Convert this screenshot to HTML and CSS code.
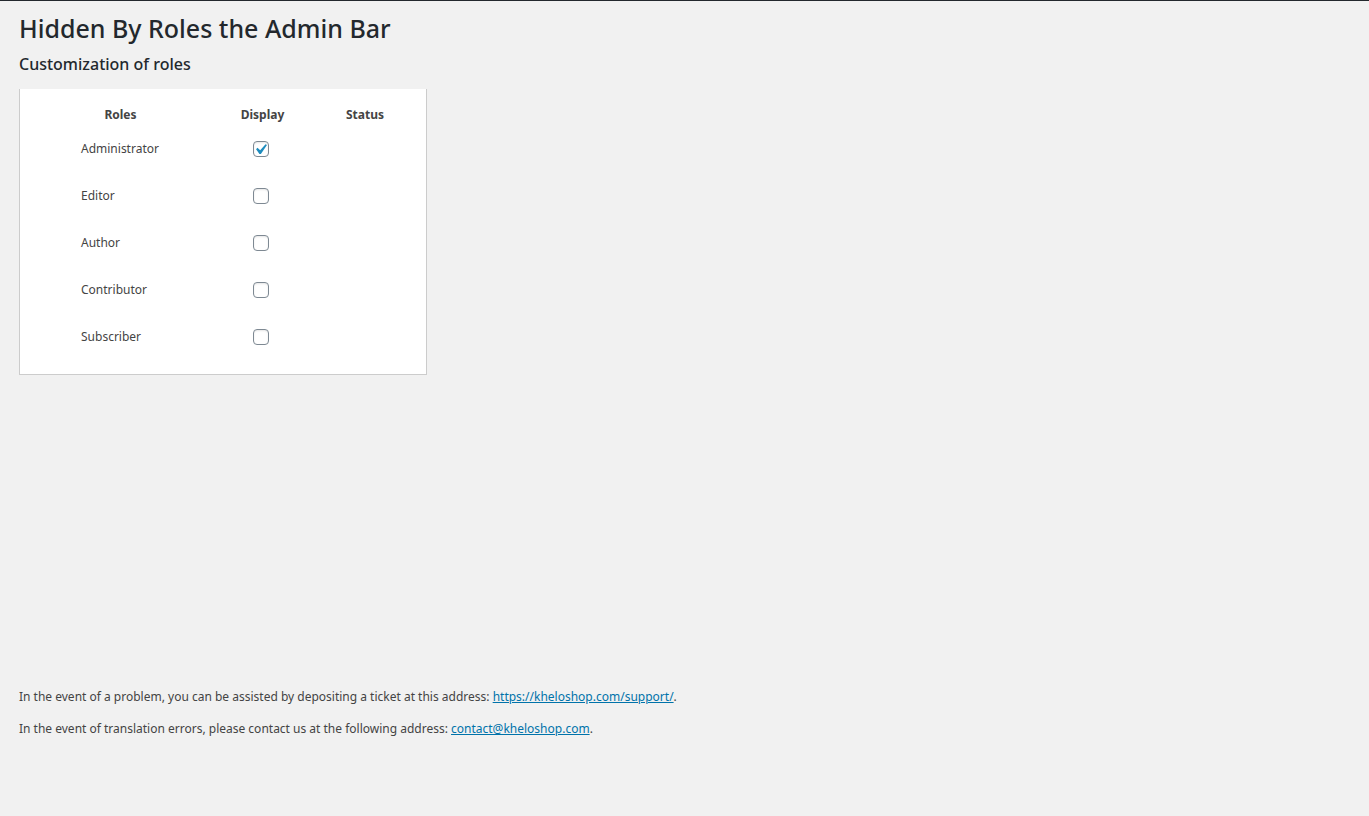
FILE: index.html
```html
<!DOCTYPE html>
<html lang="en">
<head>
<meta charset="utf-8">
<title>Hidden By Roles the Admin Bar</title>
<link rel="stylesheet" href="styles.css">
</head>
<body>
<main class="wrap">
<h1 class="title">Hidden By Roles the Admin Bar</h1>
<h2 class="subtitle">Customization of roles</h2>
<form class="panel">
<table class="roles">
<thead><tr><th class="col-role" scope="col">Roles</th><th class="col-display" scope="col">Display</th><th class="col-status" scope="col">Status</th></tr></thead>
<tbody>
<tr><td><label for="administrator">Administrator</label></td><td class="cell-check"><input class="check" type="checkbox" id="administrator" checked></td><td></td></tr>
<tr><td><label for="editor">Editor</label></td><td class="cell-check"><input class="check" type="checkbox" id="editor"></td><td></td></tr>
<tr><td><label for="author">Author</label></td><td class="cell-check"><input class="check" type="checkbox" id="author"></td><td></td></tr>
<tr><td><label for="contributor">Contributor</label></td><td class="cell-check"><input class="check" type="checkbox" id="contributor"></td><td></td></tr>
<tr><td><label for="subscriber">Subscriber</label></td><td class="cell-check"><input class="check" type="checkbox" id="subscriber"></td><td></td></tr>
</tbody>
</table>
</form>
<footer class="help">
<p>In the event of a problem, you can be assisted by depositing a ticket at this address: <a href="https://kheloshop.com/support/">https://kheloshop.com/support/</a>.</p>
<p>In the event of translation errors, please contact us at the following address: <a href="mailto:contact@kheloshop.com">contact@kheloshop.com</a>.</p>
</footer>
</main>
</body>
</html>
```
FILE: styles.css
```css
* { box-sizing: border-box; }
body {
  margin: 0;
  min-height: 100vh;
  border-top: 1px solid #23282d;
  background: #f1f1f1;
  color: #444;
  font: 12px/20px "Noto Sans", "Open Sans", sans-serif;
}
.wrap { padding: 9px 19px; }
.title { margin: 0; color: #23282d; font-size: 25px; font-weight: 500; line-height: 36px; }
.subtitle { margin: 8px 0 15px; color: #23282d; font-size: 16px; font-weight: 500; line-height: 20px; }
.panel {
  width: 408px;
  max-width: 100%;
  padding: 10px;
  border: 1px solid #ccc;
  border-top: 0;
  background: #fff;
}
.roles { width: 100%; table-layout: fixed; border-collapse: collapse; }
.roles th { height: 30px; padding: 2px 0 0; font-weight: 700; text-align: center; }
.roles td { height: 47px; padding: 10px 0 0; vertical-align: top; }
.roles td:first-child { padding-left: 51px; }
.roles .cell-check { padding-left: 42px; }
.col-role { width: 181px; }
.col-display { width: 103px; }
.check {
  display: block;
  appearance: none;
  width: 16px;
  height: 16px;
  margin: 2px 0 0;
  border: 1px solid #7e8993;
  border-radius: 4px;
  background: #fff;
  box-shadow: inset 0 1px 2px rgba(0, 0, 0, 0.1);
}
.check:checked {
  background: #fff url("data:image/svg+xml,%3Csvg xmlns='http://www.w3.org/2000/svg' viewBox='0 0 20 20'%3E%3Cpath d='M14.83 4.89l1.34.94-5.81 8.38H9.02L5.78 9.67l1.34-1.25 2.57 2.4z' fill='%231e8cbe'/%3E%3C/svg%3E") -4px -3px / 21px 21px no-repeat;
}
.help { margin-top: 312px; }
.help p { margin: 0 0 12px; }
.help a { color: #0073aa; }
```
